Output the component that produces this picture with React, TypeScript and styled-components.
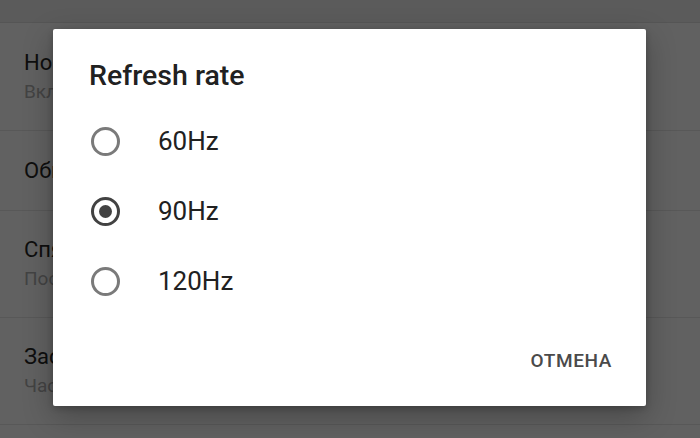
import styled, { createGlobalStyle } from 'styled-components';

const GlobalStyle = createGlobalStyle`
	html, body {
		margin: 0;
		padding: 0;
		width: 700px;
		height: 438px;
		overflow: hidden;
		background: #5f5f5f;
		font-family: Roboto, 'Noto Sans', sans-serif;
	}
`;

const options = ['60Hz', '90Hz', '120Hz'];

type SettingItem = { title: string; subtitle?: string; height: number };
const items: SettingItem[] = [
	{ title: 'Нормальный режим', subtitle: 'Включено', height: 108 },
	{ title: 'Обновление экрана', height: 80 },
	{ title: 'Спящий режим', subtitle: 'После 1 минуты бездействия', height: 107 },
	{ title: 'Заставка', subtitle: 'Часы', height: 107 },
];

export default function App() {
	const selected = '90Hz';
	return (
		<>
			<GlobalStyle />
			<Screen>
				<SettingsList>
					<TopStrip />
					{items.map(item => (
						<Setting key={item.title} h={item.height}>
							<SettingTitle>{item.title}</SettingTitle>
							{item.subtitle && <SettingSub>{item.subtitle}</SettingSub>}
						</Setting>
					))}
				</SettingsList>
				<Dialog>
					<DialogTitle>Refresh rate</DialogTitle>
					<OptionList>
						{options.map(o => (
							<Option key={o}>
								<Radio checked={o === selected} />
								<OptionLabel>{o}</OptionLabel>
							</Option>
						))}
					</OptionList>
					<Actions>
						<TextButton>Отмена</TextButton>
					</Actions>
				</Dialog>
			</Screen>
		</>
	);
}

const Screen = styled.div`
	position: relative;
	width: 700px;
	height: 438px;
	background: #616161;
	overflow: hidden;
`;

const SettingsList = styled.div`
	display: flex;
	flex-direction: column;
`;

const TopStrip = styled.div`
	height: 23px;
	background: #5b5b5b;
	border-bottom: 1px solid #555;
	box-sizing: border-box;
`;

const Setting = styled.div<{ h: number }>`
	height: ${p => p.h}px;
	box-sizing: border-box;
	border-bottom: 1px solid #585858;
	padding-left: 24px;
	display: flex;
	flex-direction: column;
	justify-content: center;
	gap: 2px;
	white-space: nowrap;
`;

/* the rest of each row lies under the dialog, so it is clipped at its edge */
const SettingTitle = styled.div`
	width: 29px;
	overflow: hidden;
	font-size: 22px;
	line-height: 28px;
	color: #0e0e0e;
`;

const SettingSub = styled.div`
	width: 29px;
	overflow: hidden;
	font-size: 19px;
	line-height: 26px;
	color: #434343;
`;

const Dialog = styled.div`
	position: absolute;
	left: 53px;
	top: 29px;
	width: 593px;
	height: 377px;
	box-sizing: border-box;
	background: #fff;
	border-radius: 2px;
	box-shadow: 0 10px 30px rgba(0, 0, 0, 0.28), 0 2px 6px rgba(0, 0, 0, 0.2);
	display: flex;
	flex-direction: column;
	padding: 30px 0 0 0;
`;

const DialogTitle = styled.div`
	padding-left: 36px;
	font-size: 28.5px;
	font-weight: 500;
	line-height: 34px;
	color: #212121;
`;

const OptionList = styled.div`
	display: flex;
	flex-direction: column;
	margin-top: 13px;
`;

const Option = styled.div`
	height: 70px;
	display: flex;
	align-items: center;
	padding-left: 38px;
`;

const Radio = styled.span<{ checked: boolean }>`
	width: 29px;
	height: 29px;
	box-sizing: border-box;
	border-radius: 50%;
	border: 3px solid ${p => (p.checked ? '#424242' : '#7a7a7a')};
	display: flex;
	align-items: center;
	justify-content: center;
	&::after {
		content: '';
		width: 13px;
		height: 13px;
		border-radius: 50%;
		background: #424242;
		display: ${p => (p.checked ? 'block' : 'none')};
	}
`;

const OptionLabel = styled.span`
	margin-left: 38px;
	font-size: 26px;
	color: #212121;
`;

const Actions = styled.div`
	margin-top: auto;
	height: 60px;
	display: flex;
	justify-content: flex-end;
	align-items: flex-start;
	padding-right: 34px;
`;

const TextButton = styled.button`
	border: none;
	background: none;
	padding: 0;
	font-family: Roboto, 'Noto Sans', sans-serif;
	font-size: 19px;
	font-weight: 500;
	letter-spacing: 0.6px;
	text-transform: uppercase;
	color: #4a4a4a;
	line-height: 30px;
`;
